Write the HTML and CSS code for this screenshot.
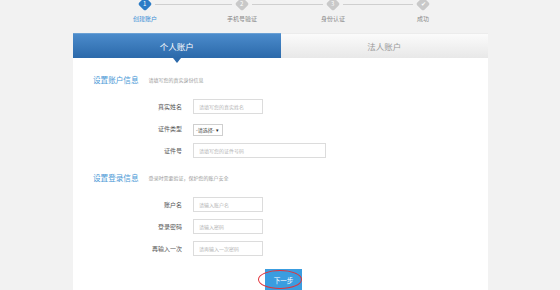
FILE: index.html
```html
<!DOCTYPE html>
<html lang="zh-CN">
<head>
    <meta charset="UTF-8">
    <meta name="viewport" content="width=device-width, initial-scale=1.0">
    <title>创建账户</title>
    <link rel="stylesheet" href="styles.css">
</head>
<body>
    <div class="steps">
        <div class="step active">
            <div class="mark"><span>1</span></div>
            <div class="step-name">创建账户</div>
        </div>
        <div class="line line-1"></div>
        <div class="step">
            <div class="mark"><span>2</span></div>
            <div class="step-name">手机号验证</div>
        </div>
        <div class="line line-2"></div>
        <div class="step">
            <div class="mark"><span>3</span></div>
            <div class="step-name">身份认证</div>
        </div>
        <div class="line line-3"></div>
        <div class="step">
            <div class="mark"><span>&#10004;</span></div>
            <div class="step-name">成功</div>
        </div>
    </div>

    <div class="card">
        <div class="tabs">
            <div class="tab tab-active">个人账户</div>
            <div class="tab">法人账户</div>
        </div>

        <div class="card-body">
            <div class="section-title">
                <h2>设置账户信息</h2>
                <span class="hint">请填写您的真实身份信息</span>
            </div>
            <div class="form-row">
                <label for="realname">真实姓名</label>
                <input type="text" id="realname" class="short" placeholder="请填写您的真实姓名" />
            </div>
            <div class="form-row">
                <label>证件类型</label>
                <div class="select">-请选择- <span class="caret">&#9662;</span></div>
            </div>
            <div class="form-row">
                <label for="idno">证件号</label>
                <input type="text" id="idno" class="long" placeholder="请填写您的证件号码" />
            </div>

            <div class="section-title second">
                <h2>设置登录信息</h2>
                <span class="hint">登录时需要验证，保护您的账户安全</span>
            </div>
            <div class="form-row">
                <label for="account">账户名</label>
                <input type="text" id="account" class="short" placeholder="请输入账户名" />
            </div>
            <div class="form-row">
                <label for="pwd">登录密码</label>
                <input type="password" id="pwd" class="short" placeholder="请输入密码" />
            </div>
            <div class="form-row">
                <label for="pwd2">再输入一次</label>
                <input type="password" id="pwd2" class="short" placeholder="请再输入一次密码" />
            </div>

            <div class="actions">
                <button class="next-btn">下一步</button>
            </div>
        </div>
    </div>
</body>
</html>
```

FILE: styles.css
```css
body {
    font-family: "Noto Sans CJK SC", "Liberation Sans", sans-serif;
    background-color: #f2f2f2;
    margin: 0;
    overflow: hidden;
}
.steps {
    display: flex;
    align-items: flex-start;
    height: 24px;
    padding-left: 135px;
}
.step {
    width: 20px;
    display: flex;
    flex-direction: column;
    align-items: center;
}
.mark {
    width: 10px;
    height: 10px;
    margin-top: -1px;
    border-radius: 2px;
    background-color: #c9c9c9;
    transform: rotate(45deg);
    display: flex;
    align-items: center;
    justify-content: center;
}
.mark span {
    transform: rotate(-45deg);
    color: #fff;
    font-size: 6px;
    line-height: 6px;
}
.step.active .mark {
    background-color: #2d7cc6;
}
.step-name {
    margin-top: 6px;
    font-size: 6px;
    line-height: 8px;
    color: #888;
    white-space: nowrap;
}
.step.active .step-name {
    color: #3c8fd6;
}
.line {
    height: 1px;
    margin-top: 4px;
    background-color: #cfcfcf;
}
.line-1 {
    width: 77px;
}
.line-2 {
    width: 71px;
}
.line-3 {
    width: 70px;
}
.card {
    margin-top: 9px;
    margin-left: 73px;
    width: 415px;
    height: 300px;
    background-color: #ffffff;
}
.tabs {
    display: flex;
    height: 25px;
}
.tab {
    flex: 1;
    display: flex;
    align-items: center;
    justify-content: center;
    font-size: 8.5px;
    color: #9a9a9a;
    background: linear-gradient(#fbfbfb, #e8e8e8);
    border-top: 1px solid #ececec;
}
.tab-active {
    position: relative;
    color: #ffffff;
    background: linear-gradient(#4b8bcb, #2b69aa);
    border-top: 1px solid #6aa0d4;
}
.tab-active::after {
    content: "";
    position: absolute;
    left: 50%;
    bottom: -5px;
    margin-left: -4px;
    border-left: 4px solid transparent;
    border-right: 4px solid transparent;
    border-top: 5px solid #2b69aa;
}
.card-body {
    padding: 16px 20px 0;
}
.section-title {
    display: flex;
    align-items: center;
    height: 10px;
    margin-bottom: 15px;
}
.section-title.second {
    margin-top: 14px;
}
.section-title h2 {
    margin: 0;
    font-size: 7.6px;
    font-weight: normal;
    color: #4a98d6;
}
.hint {
    margin-left: 10px;
    font-size: 5px;
    color: #999;
}
.form-row {
    display: flex;
    align-items: center;
    height: 15px;
    margin-bottom: 7px;
}
.form-row label {
    width: 89px;
    margin-right: 11px;
    text-align: right;
    font-size: 6px;
    color: #555;
}
input[type="text"], input[type="password"] {
    box-sizing: border-box;
    height: 15px;
    padding: 0 5px;
    border: 1px solid #dcdcdc;
    font-family: inherit;
    font-size: 5px;
    outline: none;
}
input::placeholder {
    color: #b5b5b5;
}
.short {
    width: 70px;
}
.long {
    width: 133px;
    height: 14px;
}
.select {
    box-sizing: border-box;
    width: 30px;
    height: 12px;
    margin-top: 3px;
    padding-left: 2px;
    border: 1px solid #cfcfcf;
    font-size: 5px;
    line-height: 10px;
    color: #444;
    white-space: nowrap;
}
.caret {
    font-size: 5px;
    color: #222;
}
.actions {
    padding-left: 172px;
    margin-top: 8px;
}
.next-btn {
    position: relative;
    width: 37px;
    height: 22px;
    padding: 0;
    border: none;
    background-color: #3a9de0;
    color: #fff;
    font-family: inherit;
    font-size: 6.5px;
    cursor: pointer;
}
.next-btn::after {
    content: "";
    position: absolute;
    left: -7px;
    top: 1px;
    width: 42px;
    height: 17px;
    border: 1.5px solid #e2323a;
    border-radius: 50%;
}
```
